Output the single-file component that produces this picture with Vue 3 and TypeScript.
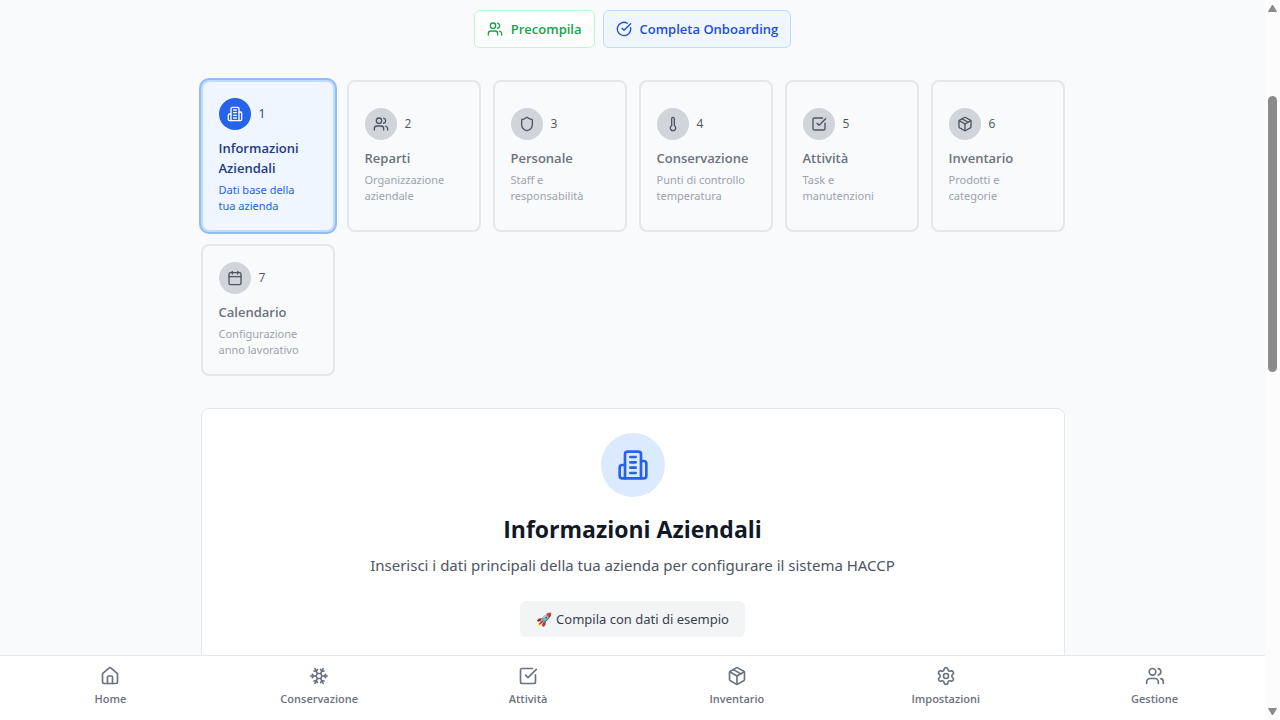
<script setup lang="ts">
import { defineComponent, h, ref } from 'vue'

type IconName =
  | 'users' | 'circleCheck' | 'building' | 'shield' | 'thermometer'
  | 'squareCheck' | 'package' | 'calendar' | 'home' | 'snowflake' | 'settings'

const icons: Record<IconName, string[]> = {
  users: [
    'M16 21v-2a4 4 0 0 0-4-4H6a4 4 0 0 0-4 4v2',
    'M5 7a4 4 0 1 0 8 0a4 4 0 1 0-8 0',
    'M22 21v-2a4 4 0 0 0-3-3.87',
    'M16 3.128a4 4 0 0 1 0 7.744',
  ],
  circleCheck: ['M21.801 10A10 10 0 1 1 17 3.335', 'm9 11 3 3L22 4'],
  building: [
    'M6 22V4a2 2 0 0 1 2-2h8a2 2 0 0 1 2 2v18Z',
    'M6 12H4a2 2 0 0 0-2 2v6a2 2 0 0 0 2 2h2',
    'M18 9h2a2 2 0 0 1 2 2v9a2 2 0 0 1-2 2h-2',
    'M10 6h4', 'M10 10h4', 'M10 14h4', 'M10 18h4',
  ],
  shield: [
    'M20 13c0 5-3.5 7.5-7.66 8.95a1 1 0 0 1-.67-.01C7.5 20.5 4 18 4 13V6a1 1 0 0 1 1-1c2 0 4.5-1.2 6.24-2.72a1.17 1.17 0 0 1 1.52 0C14.51 3.81 17 5 19 5a1 1 0 0 1 1 1z',
  ],
  thermometer: ['M14 4v10.54a4 4 0 1 1-4 0V4a2 2 0 0 1 4 0Z'],
  squareCheck: [
    'M21 10.656V19a2 2 0 0 1-2 2H5a2 2 0 0 1-2-2V5a2 2 0 0 1 2-2h12.344',
    'm9 11 3 3L22 4',
  ],
  package: [
    'M11 21.73a2 2 0 0 0 2 0l7-4A2 2 0 0 0 21 16V8a2 2 0 0 0-1-1.73l-7-4a2 2 0 0 0-2 0l-7 4A2 2 0 0 0 3 8v8a2 2 0 0 0 1 1.73z',
    'M12 22V12', 'm3.29 7 8.71 5 8.71-5', 'm7.5 4.27 9 5.15',
  ],
  calendar: [
    'M8 2v4', 'M16 2v4',
    'M5 4h14a2 2 0 0 1 2 2v14a2 2 0 0 1-2 2H5a2 2 0 0 1-2-2V6a2 2 0 0 1 2-2z',
    'M3 10h18',
  ],
  home: [
    'M15 21v-8a1 1 0 0 0-1-1h-4a1 1 0 0 0-1 1v8',
    'M3 10a2 2 0 0 1 .709-1.528l7-5.999a2 2 0 0 1 2.582 0l7 5.999A2 2 0 0 1 21 10v9a2 2 0 0 1-2 2H5a2 2 0 0 1-2-2z',
  ],
  snowflake: [
    'm10 20-1.25-2.5L6 18', 'M10 4 8.75 6.5 6 6', 'm14 20 1.25-2.5L18 18', 'm14 4 1.25 2.5L18 6',
    'm17 21-3-6h-4', 'm17 3-3 6 1.5 3', 'M2 12h6.5L10 9', 'm20 10-1.5 2 1.5 2',
    'M22 12h-6.5L14 15', 'm4 10 1.5 2L4 14', 'm7 21 3-6-1.5-3', 'm7 3 3 6h4',
  ],
  settings: [
    'M9.671 4.136a2.34 2.34 0 0 1 4.659 0 2.34 2.34 0 0 0 3.319 1.915 2.34 2.34 0 0 1 2.33 4.033 2.34 2.34 0 0 0 0 3.831 2.34 2.34 0 0 1-2.33 4.033 2.34 2.34 0 0 0-3.319 1.915 2.34 2.34 0 0 1-4.659 0 2.34 2.34 0 0 0-3.32-1.915 2.34 2.34 0 0 1-2.33-4.033 2.34 2.34 0 0 0 0-3.831A2.34 2.34 0 0 1 6.35 6.051a2.34 2.34 0 0 0 3.319-1.915',
    'M9 12a3 3 0 1 0 6 0a3 3 0 1 0-6 0',
  ],
}

const LineIcon = defineComponent({
  props: { name: { type: String, required: true }, size: { type: Number, default: 16 } },
  setup(props) {
    return () =>
      h(
        'svg',
        {
          width: props.size,
          height: props.size,
          viewBox: '0 0 24 24',
          fill: 'none',
          stroke: 'currentColor',
          'stroke-width': 2,
          'stroke-linecap': 'round',
          'stroke-linejoin': 'round',
          'aria-hidden': 'true',
        },
        icons[props.name as IconName].map((d) => h('path', { d })),
      )
  },
})

interface Step { title: string; text: string; icon: IconName }

const steps: Step[] = [
  { title: 'Informazioni Aziendali', text: 'Dati base della tua azienda', icon: 'building' },
  { title: 'Reparti', text: 'Organizzazione aziendale', icon: 'users' },
  { title: 'Personale', text: 'Staff e responsabilità', icon: 'shield' },
  { title: 'Conservazione', text: 'Punti di controllo temperatura', icon: 'thermometer' },
  { title: 'Attività', text: 'Task e manutenzioni', icon: 'squareCheck' },
  { title: 'Inventario', text: 'Prodotti e categorie', icon: 'package' },
  { title: 'Calendario', text: 'Configurazione anno lavorativo', icon: 'calendar' },
]
const current = ref(0)

const tabs: { label: string; icon: IconName }[] = [
  { label: 'Home', icon: 'home' },
  { label: 'Conservazione', icon: 'snowflake' },
  { label: 'Attività', icon: 'squareCheck' },
  { label: 'Inventario', icon: 'package' },
  { label: 'Impostazioni', icon: 'settings' },
  { label: 'Gestione', icon: 'users' },
]
</script>

<template>
  <div class="app">
    <div class="page">
      <main class="content">
        <div class="container">
          <div class="actions">
            <button type="button" class="action action-green">
              <LineIcon name="users" /><span>Precompila</span>
            </button>
            <button type="button" class="action action-blue">
              <LineIcon name="circleCheck" /><span>Completa Onboarding</span>
            </button>
          </div>

          <div class="steps">
            <button
              v-for="(step, i) in steps"
              :key="step.title"
              type="button"
              class="step"
              :class="{ active: i === current }"
            >
              <span class="step-head">
                <span class="step-icon"><LineIcon :name="step.icon" /></span>
                <span class="step-number">{{ i + 1 }}</span>
              </span>
              <span class="step-title">{{ step.title }}</span>
              <span class="step-text">{{ step.text }}</span>
            </button>
          </div>

          <section class="panel">
            <div class="panel-icon"><LineIcon name="building" :size="32" /></div>
            <h2>Informazioni Aziendali</h2>
            <p>Inserisci i dati principali della tua azienda per configurare il sistema HACCP</p>
            <button type="button" class="sample"><span>🚀</span><span>Compila con dati di esempio</span></button>
          </section>
        </div>
      </main>

      <nav class="tabs">
        <a v-for="tab in tabs" :key="tab.label" href="#" class="tab">
          <LineIcon :name="tab.icon" :size="20" /><span>{{ tab.label }}</span>
        </a>
      </nav>
    </div>

    <div class="scrollbar" aria-hidden="true">
      <svg width="11" height="8" viewBox="0 0 11 8"><path d="M5.5 1 9.5 7.5H1.5Z" stroke-width="1" /></svg>
      <div class="track"><div class="thumb"></div></div>
      <svg width="11" height="8" viewBox="0 0 11 8"><path d="M5.5 7 9.5 .5H1.5Z" stroke-width="1" /></svg>
    </div>
  </div>
</template>

<style>
body {
  margin: 0;
  background: #f9fafb;
}
</style>

<style scoped>
.app {
  display: flex;
  height: 100vh;
  overflow: hidden;
  background: #f8fafc;
  font-family: "Segoe UI", "Open Sans", "Noto Sans", sans-serif;
}
button {
  margin: 0;
  font-family: inherit;
  cursor: pointer;
}
svg {
  display: block;
  flex: none;
}
.page {
  flex: 1;
  min-width: 0;
  display: flex;
  flex-direction: column;
}
.content {
  flex: 1;
  min-height: 0;
  overflow: hidden;
}
.container {
  max-width: 864px;
  margin: 0 auto;
  padding: 10px 16px 0;
}
.actions {
  display: flex;
  justify-content: center;
  gap: 8px;
  margin-bottom: 32px;
}
.action {
  display: flex;
  align-items: center;
  gap: 8px;
  padding: 8px 12px;
  border: 1px solid;
  border-radius: 6px;
  font-size: 13px;
  font-weight: 600;
  line-height: 20px;
}
.action-green {
  color: #16a34a;
  background: #fff;
  border-color: #bbf7d0;
}
.action-blue {
  color: #1d4ed8;
  background: #eff6ff;
  border-color: #bfdbfe;
}
.steps {
  display: grid;
  grid-template-columns: repeat(6, minmax(0, 1fr));
  gap: 12px;
  margin-bottom: 32px;
}
.step {
  display: flex;
  flex-direction: column;
  justify-content: center;
  padding: 16px;
  border: 2px solid #e5e7eb;
  border-radius: 8px;
  background: #f9fafb;
  color: #6b7280;
  text-align: left;
}
.step-head {
  display: flex;
  align-items: center;
  gap: 8px;
  margin-bottom: 8px;
}
.step-icon {
  display: flex;
  align-items: center;
  justify-content: center;
  width: 32px;
  height: 32px;
  border-radius: 50%;
  background: #d1d5db;
  color: #4b5563;
}
.step-number {
  font-size: 12px;
  font-weight: 500;
  line-height: 20px;
  color: #4b5563;
}
.step-title {
  margin-bottom: 4px;
  font-size: 13px;
  font-weight: 600;
  line-height: 20px;
}
.step-text {
  padding-right: 8px;
  font-family: "Segoe UI", "Noto Sans", "Open Sans", sans-serif;
  font-size: 11px;
  line-height: 16px;
  color: #9ca3af;
}
.step.active {
  border-color: #bfdbfe;
  background: #eff6ff;
  color: #1e3a8a;
  box-shadow: 0 0 0 2px #93bbfb;
}
.step.active .step-icon {
  background: #2563eb;
  color: #fff;
}
.step.active .step-number {
  color: #1e3a8a;
}
.step.active .step-text {
  color: #2563eb;
}
.panel {
  display: flex;
  flex-direction: column;
  align-items: center;
  padding: 24px;
  border: 1px solid #e5e7eb;
  border-radius: 8px;
  background: #fff;
  text-align: center;
}
.panel-icon {
  display: flex;
  align-items: center;
  justify-content: center;
  width: 64px;
  height: 64px;
  margin-bottom: 16px;
  border-radius: 50%;
  background: #dbeafe;
  color: #2563eb;
}
h2 {
  margin: 0 0 8px;
  font-size: 23px;
  font-weight: 700;
  line-height: 32px;
  color: #111827;
}
p {
  margin: 0 0 24px;
  font-family: "Segoe UI", "Noto Sans", "Open Sans", sans-serif;
  font-size: 15px;
  line-height: 24px;
  color: #4b5563;
}
.sample {
  display: flex;
  gap: 4px;
  padding: 8px 16px;
  border: 0;
  border-radius: 6px;
  background: #f3f4f6;
  font-family: "Segoe UI", "Noto Sans", "Open Sans", sans-serif;
  font-size: 13px;
  line-height: 20px;
  color: #374151;
}
.tabs {
  display: grid;
  grid-template-columns: repeat(6, minmax(0, 1fr));
  gap: 4px;
  padding: 0 8px;
  border-top: 1px solid #e5e7eb;
  background: #fff;
}
.tab {
  display: flex;
  flex-direction: column;
  align-items: center;
  gap: 5px;
  padding: 10px 0 13px;
  font-size: 11px;
  font-weight: 600;
  line-height: 16px;
  color: #6b7280;
  text-decoration: none;
}
.scrollbar {
  display: flex;
  flex-direction: column;
  align-items: center;
  width: 15px;
  padding: 4px 0;
  box-sizing: border-box;
  background: #fcfcfc;
  fill: #8b8b8b;
  stroke: #8b8b8b;
  stroke-linejoin: round;
}
.track {
  flex: 1;
  padding-top: 84px;
}
.thumb {
  width: 9px;
  height: 276px;
  border-radius: 5px;
  background: #8b8b8b;
}
</style>
